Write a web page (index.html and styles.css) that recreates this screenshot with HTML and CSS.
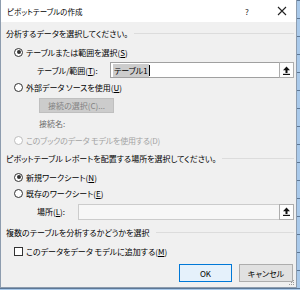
FILE: index.html
```html
<!DOCTYPE html>
<html lang="ja">
<head>
  <meta charset="UTF-8">
  <title>ピボットテーブルの作成</title>
  <link rel="stylesheet" href="styles.css">
</head>
<body>
  <div class="dialog">
    <div class="titlebar">
      <span class="title">ピボットテーブルの作成</span>
      <span class="help">?</span>
      <span class="close">
        <svg width="10" height="10" viewBox="0 0 10 10"><path d="M1 1 L9 9 M9 1 L1 9" stroke="#222" stroke-width="1.1"/></svg>
      </span>
    </div>

    <div class="body">
      <div class="row group h1">
        <span class="group-label">分析するデータを選択してください。</span>
        <span class="rule"></span>
      </div>

      <div class="row r1">
        <span class="radio checked"></span>
        <span>テーブルまたは範囲を選択(<u>S</u>)</span>
      </div>

      <div class="row field-row range">
        <span class="field-label">テーブル/範囲(<u>T</u>):</span>
        <div class="field">
          <div class="input"><span class="sel">テーブル1</span><span class="caret"></span></div>
          <span class="collapse">
            <svg width="9" height="9" viewBox="0 0 9 9"><path d="M4.5 0.5 L1 4.2 H3.5 V7 H5.5 V4.2 H8 Z" fill="#111"/><rect x="1" y="7.8" width="7" height="1.2" fill="#111"/></svg>
          </span>
        </div>
      </div>

      <div class="row r2">
        <span class="radio"></span>
        <span>外部データ ソースを使用(<u>U</u>)</span>
      </div>

      <div class="row btn-row">
        <span class="btn disabled">接続の選択(C)...</span>
      </div>

      <div class="row conn-name">
        <span class="muted">接続名:</span>
      </div>

      <div class="row r3 off">
        <span class="radio"></span>
        <span class="tight">このブックのデータ モデルを使用する(D)</span>
      </div>

      <div class="row group h2">
        <span class="group-label">ピボットテーブル レポートを配置する場所を選択してください。</span>
        <span class="rule"></span>
      </div>

      <div class="row rn">
        <span class="radio checked"></span>
        <span>新規ワークシート(<u>N</u>)</span>
      </div>

      <div class="row re">
        <span class="radio"></span>
        <span>既存のワークシート(<u>E</u>)</span>
      </div>

      <div class="row field-row loc">
        <span class="field-label">場所(<u>L</u>):</span>
        <div class="field">
          <div class="input dim"></div>
          <span class="collapse">
            <svg width="9" height="9" viewBox="0 0 9 9"><path d="M4.5 0.5 L1 4.2 H3.5 V7 H5.5 V4.2 H8 Z" fill="#111"/><rect x="1" y="7.8" width="7" height="1.2" fill="#111"/></svg>
          </span>
        </div>
      </div>

      <div class="row group h3">
        <span class="group-label">複数のテーブルを分析するかどうかを選択</span>
        <span class="rule"></span>
      </div>

      <div class="row cb">
        <span class="check"></span>
        <span>このデータをデータ モデルに追加する(<u>M</u>)</span>
      </div>

      <div class="actions">
        <span class="btn primary">OK</span>
        <span class="btn">キャンセル</span>
      </div>
    </div>

    <svg class="grip" width="7" height="7" viewBox="0 0 7 7">
      <rect x="5" y="1" width="1" height="1" fill="#999"/>
      <rect x="3" y="3" width="1" height="1" fill="#999"/>
      <rect x="5" y="3" width="1" height="1" fill="#999"/>
      <rect x="1" y="5" width="1" height="1" fill="#999"/>
      <rect x="3" y="5" width="1" height="1" fill="#999"/>
      <rect x="5" y="5" width="1" height="1" fill="#999"/>
    </svg>
  </div>
</body>
</html>
```

FILE: styles.css
```css
* {
  margin: 0;
  padding: 0;
  box-sizing: border-box;
}

body {
  width: 300px;
  height: 290px;
  overflow: hidden;
  background: repeating-linear-gradient(to bottom, #5d7896 0 1px, #a9c9ea 1px 18px);
  font-family: "Noto Sans CJK JP", "Noto Sans", sans-serif;
  font-size: 8px;
  font-feature-settings: "palt";
  color: #000;
}

.dialog {
  position: relative;
  width: 297px;
  height: 288px;
  background: #f0f0f0;
  border: 1px solid #8d9cae;
  border-top: none;
}

.titlebar {
  height: 22px;
  background: #fff;
  display: flex;
  align-items: center;
  padding-left: 6px;
}

.title {
  flex: 1;
  font-size: 7.5px;
}

.help {
  width: 10px;
  font-size: 8px;
  margin-right: 22px;
  color: #222;
}

.close {
  display: flex;
  margin-right: 9px;
}

.body {
  padding: 0 2px 0 5px;
}

.row {
  display: flex;
  align-items: center;
  white-space: nowrap;
}

.row u {
  text-decoration: underline;
  text-underline-offset: 1px;
}

.group .rule {
  flex: 1;
  height: 1px;
  background: #dcdcdc;
  margin-left: 6px;
}

.h1 { height: 22px; }
.r1 { height: 16px; }
.range { height: 20px; }
.r2 { height: 15px; }
.btn-row { height: 21px; }
.conn-name { height: 15px; }
.r3 { height: 18px; }
.h2 { height: 19px; }
.rn { height: 18px; }
.re { height: 15px; }
.loc { height: 21px; }
.h3 { height: 20px; }
.cb { height: 18px; }

.radio {
  width: 9px;
  height: 9px;
  border: 1px solid #333;
  border-radius: 50%;
  background: #fff;
  margin: 0 3px 0 8px;
  display: flex;
  align-items: center;
  justify-content: center;
}

.radio.checked::after {
  content: "";
  width: 4px;
  height: 4px;
  border-radius: 50%;
  background: #333;
}

.off {
  color: #a3a3a3;
}

.off .radio {
  border-color: #bdbdbd;
}

.tight {
  letter-spacing: -0.2px;
}

.check {
  width: 9px;
  height: 9px;
  border: 1px solid #333;
  background: #fff;
  margin: 0 3px 0 8px;
}

.field-row {
  padding-left: 31px;
}

.range .field-label {
  width: 73px;
}

.loc .field-label {
  width: 41px;
}

.field {
  flex: 1;
  display: flex;
  height: 16px;
}

.input {
  flex: 1;
  background: #fff;
  border: 1px solid #a0a0a0;
  border-right: none;
  display: flex;
  align-items: center;
  padding-left: 2px;
}

.input.dim {
  background: #f7f7f7;
  border-color: #cccccc;
}

.sel {
  background: #cccccc;
  padding: 1px 1px;
  line-height: 11px;
}

.caret {
  width: 1px;
  height: 11px;
  background: #000;
}

.collapse {
  width: 15px;
  border: 1px solid #adadad;
  background: #fdfdfd;
  display: flex;
  align-items: center;
  justify-content: center;
}

.btn-row .btn {
  margin-left: 33px;
}

.btn {
  display: inline-flex;
  align-items: center;
  justify-content: center;
  height: 18px;
  width: 54px;
  background: #e1e1e1;
  border: 1px solid #adadad;
}

.btn.disabled {
  width: 75px;
  height: 15px;
  background: #cccccc;
  border-color: #bfbfbf;
  color: #838383;
}

.btn.primary {
  width: 53px;
  background: #e5f1fb;
  border-color: #0078d7;
}

.muted {
  color: #6d6d6d;
  padding-left: 33px;
}

.actions {
  display: flex;
  justify-content: flex-end;
  gap: 7px;
  padding-top: 4px;
  padding-right: 1px;
}

.grip {
  position: absolute;
  right: 1px;
  bottom: 1px;
}
```
